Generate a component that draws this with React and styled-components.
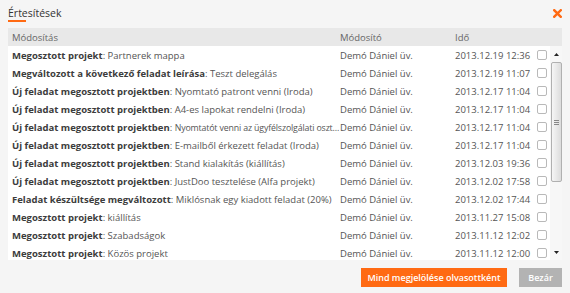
import styled, { createGlobalStyle } from "styled-components"

const GlobalStyle = createGlobalStyle`
    html, body {
        margin: 0;
        padding: 0;
        background-color: #f5f5f5;
    }
    body {
        font-family: 'Open Sans', 'DejaVu Sans', sans-serif;
    }
`

const rows = [
    { kind: "Megosztott projekt", text: "Partnerek mappa", time: "2013.12.19 12:36" },
    { kind: "Megváltozott a következő feladat leírása", text: "Teszt delegálás", time: "2013.12.19 11:07" },
    { kind: "Új feladat megosztott projektben", text: "Nyomtató patront venni (Iroda)", time: "2013.12.17 11:04" },
    { kind: "Új feladat megosztott projektben", text: "A4-es lapokat rendelni (Iroda)", time: "2013.12.17 11:04" },
    { kind: "Új feladat megosztott projektben", text: "Nyomtatót venni az ügyfélszolgálati oszt...", time: "2013.12.17 11:04", tight: true },
    { kind: "Új feladat megosztott projektben", text: "E-mailből érkezett feladat (Iroda)", time: "2013.12.17 11:04" },
    { kind: "Új feladat megosztott projektben", text: "Stand kialakítás (kiállítás)", time: "2013.12.03 19:36" },
    { kind: "Új feladat megosztott projektben", text: "JustDoo tesztelése (Alfa projekt)", time: "2013.12.02 17:58" },
    { kind: "Feladat készültsége megváltozott", text: "Miklósnak egy kiadott feladat (20%)", time: "2013.12.02 17:44" },
    { kind: "Megosztott projekt", text: "kiállítás", time: "2013.11.27 15:08" },
    { kind: "Megosztott projekt", text: "Szabadságok", time: "2013.11.12 12:02" },
    { kind: "Megosztott projekt", text: "Közös projekt", time: "2013.11.12 12:00" },
]

export default function App() {
    return (
        <>
            <GlobalStyle />
            <Panel>
                <TitleBar>
                    <Title>Értesítések</Title>
                    <Close>
                        <svg width="9" height="9" viewBox="0 0 9 9">
                            <path d="M1.2 1.2 L7.8 7.8 M7.8 1.2 L1.2 7.8" stroke="#ff6a13" strokeWidth="2.4" strokeLinecap="square" />
                        </svg>
                    </Close>
                </TitleBar>
                <Table>
                    <HeadRow>
                        <MsgCol>Módosítás</MsgCol>
                        <UserCol>Módosító</UserCol>
                        <TimeCol>Idő</TimeCol>
                    </HeadRow>
                    <Body>
                        <List>
                            {rows.map((r, i) => (
                                <Row key={i}>
                                    <MsgCol><b>{r.kind}</b>: <Detail tight={r.tight}>{r.text}</Detail></MsgCol>
                                    <UserCol>Demó Dániel üv.</UserCol>
                                    <TimeCol>{r.time}</TimeCol>
                                    <CheckCol><Check /></CheckCol>
                                </Row>
                            ))}
                        </List>
                        <Scrollbar>
                            <Arrow>
                                <svg width="5" height="3" viewBox="0 0 5 3"><path d="M0 3 L2.5 0 L5 3 Z" fill="#222" /></svg>
                            </Arrow>
                            <Track>
                                <Thumb>
                                    <Grip />
                                </Thumb>
                            </Track>
                            <Arrow>
                                <svg width="5" height="3" viewBox="0 0 5 3"><path d="M0 0 L2.5 3 L5 0 Z" fill="#222" /></svg>
                            </Arrow>
                        </Scrollbar>
                    </Body>
                </Table>
                <Footer>
                    <Button primary>Mind megjelölése olvasottként</Button>
                    <Button>Bezár</Button>
                </Footer>
            </Panel>
        </>
    )
}

const Panel = styled.div`
    width: 570px;
    height: 293px;
    box-sizing: border-box;
    padding: 0 8px;
    display: flex;
    flex-direction: column;
`

const TitleBar = styled.div`
    height: 28px;
    display: flex;
    justify-content: space-between;
    align-items: center;
`

const Title = styled.div`
    font-size: 10.5px;
    font-weight: 400;
    color: #333;
    position: relative;
    margin-top: -2px;
    &::after {
        content: "";
        position: absolute;
        left: 0;
        bottom: -2px;
        width: 18px;
        height: 2px;
        background-color: #ff6a13;
    }
`

const Close = styled.div`
    display: flex;
    margin-top: -2px;
`

const Table = styled.div`
    display: flex;
    flex-direction: column;
`

const HeadRow = styled.div`
    height: 18px;
    display: flex;
    align-items: center;
    background-color: #e8e8e8;
    font-size: 9.5px;
    color: #666;
`

const Body = styled.div`
    height: 214px;
    display: flex;
    background-color: #ffffff;
    overflow: hidden;
`

const List = styled.div`
    flex: 1;
    display: flex;
    flex-direction: column;
`

const Row = styled.div`
    height: 18px;
    flex-shrink: 0;
    display: flex;
    align-items: center;
    font-size: 9.5px;
    color: #555;
    b {
        color: #3c3c3c;
        font-weight: 700;
    }
`

const Detail = styled.span`
    font-size: ${p => (p.tight ? "8.8px" : "inherit")};
    letter-spacing: ${p => (p.tight ? "-0.15px" : "0")};
`

const MsgCol = styled.div`
    width: 328px;
    padding-left: 4px;
    white-space: nowrap;
    overflow: hidden;
`

const UserCol = styled.div`
    width: 115px;
    white-space: nowrap;
`

const TimeCol = styled.div`
    width: 82px;
    white-space: nowrap;
`

const CheckCol = styled.div`
    width: 13px;
    display: flex;
    align-items: center;
`

const Check = styled.span`
    width: 10px;
    height: 10px;
    box-sizing: border-box;
    border: 1px solid #b9b9b9;
    border-radius: 2px;
    background-color: #fff;
`

const Scrollbar = styled.div`
    width: 12px;
    display: flex;
    flex-direction: column;
    background-color: #f7f7f7;
`

const Arrow = styled.div`
    height: 16px;
    display: flex;
    align-items: center;
    justify-content: center;
`

const Track = styled.div`
    flex: 1;
    position: relative;
`

const Thumb = styled.div`
    position: absolute;
    top: 0;
    left: 1px;
    right: 0;
    height: 120px;
    box-sizing: border-box;
    border: 1px solid #b0b0b0;
    border-radius: 2px;
    background: linear-gradient(to right, #f6f6f6, #dcdcdc);
    display: flex;
    align-items: center;
    justify-content: center;
`

const Grip = styled.div`
    width: 5px;
    height: 5px;
    border-top: 1px solid #888;
    border-bottom: 1px solid #888;
    box-sizing: border-box;
    position: relative;
    &::after {
        content: "";
        position: absolute;
        left: 0;
        right: 0;
        top: 1px;
        height: 1px;
        background-color: #888;
    }
`

const Footer = styled.div`
    margin-top: 8px;
    display: flex;
    justify-content: flex-end;
    gap: 12px;
`

const Button = styled.button`
    width: ${p => (p.primary ? "146px" : "43px")};
    height: 19px;
    border: none;
    border-radius: 0;
    padding: 0;
    background-color: ${p => (p.primary ? "#ff6a13" : "#b3b3b3")};
    color: #fff;
    font-family: 'Open Sans', 'DejaVu Sans', sans-serif;
    font-size: 9px;
    font-weight: 600;
    white-space: nowrap;
    cursor: pointer;
`
